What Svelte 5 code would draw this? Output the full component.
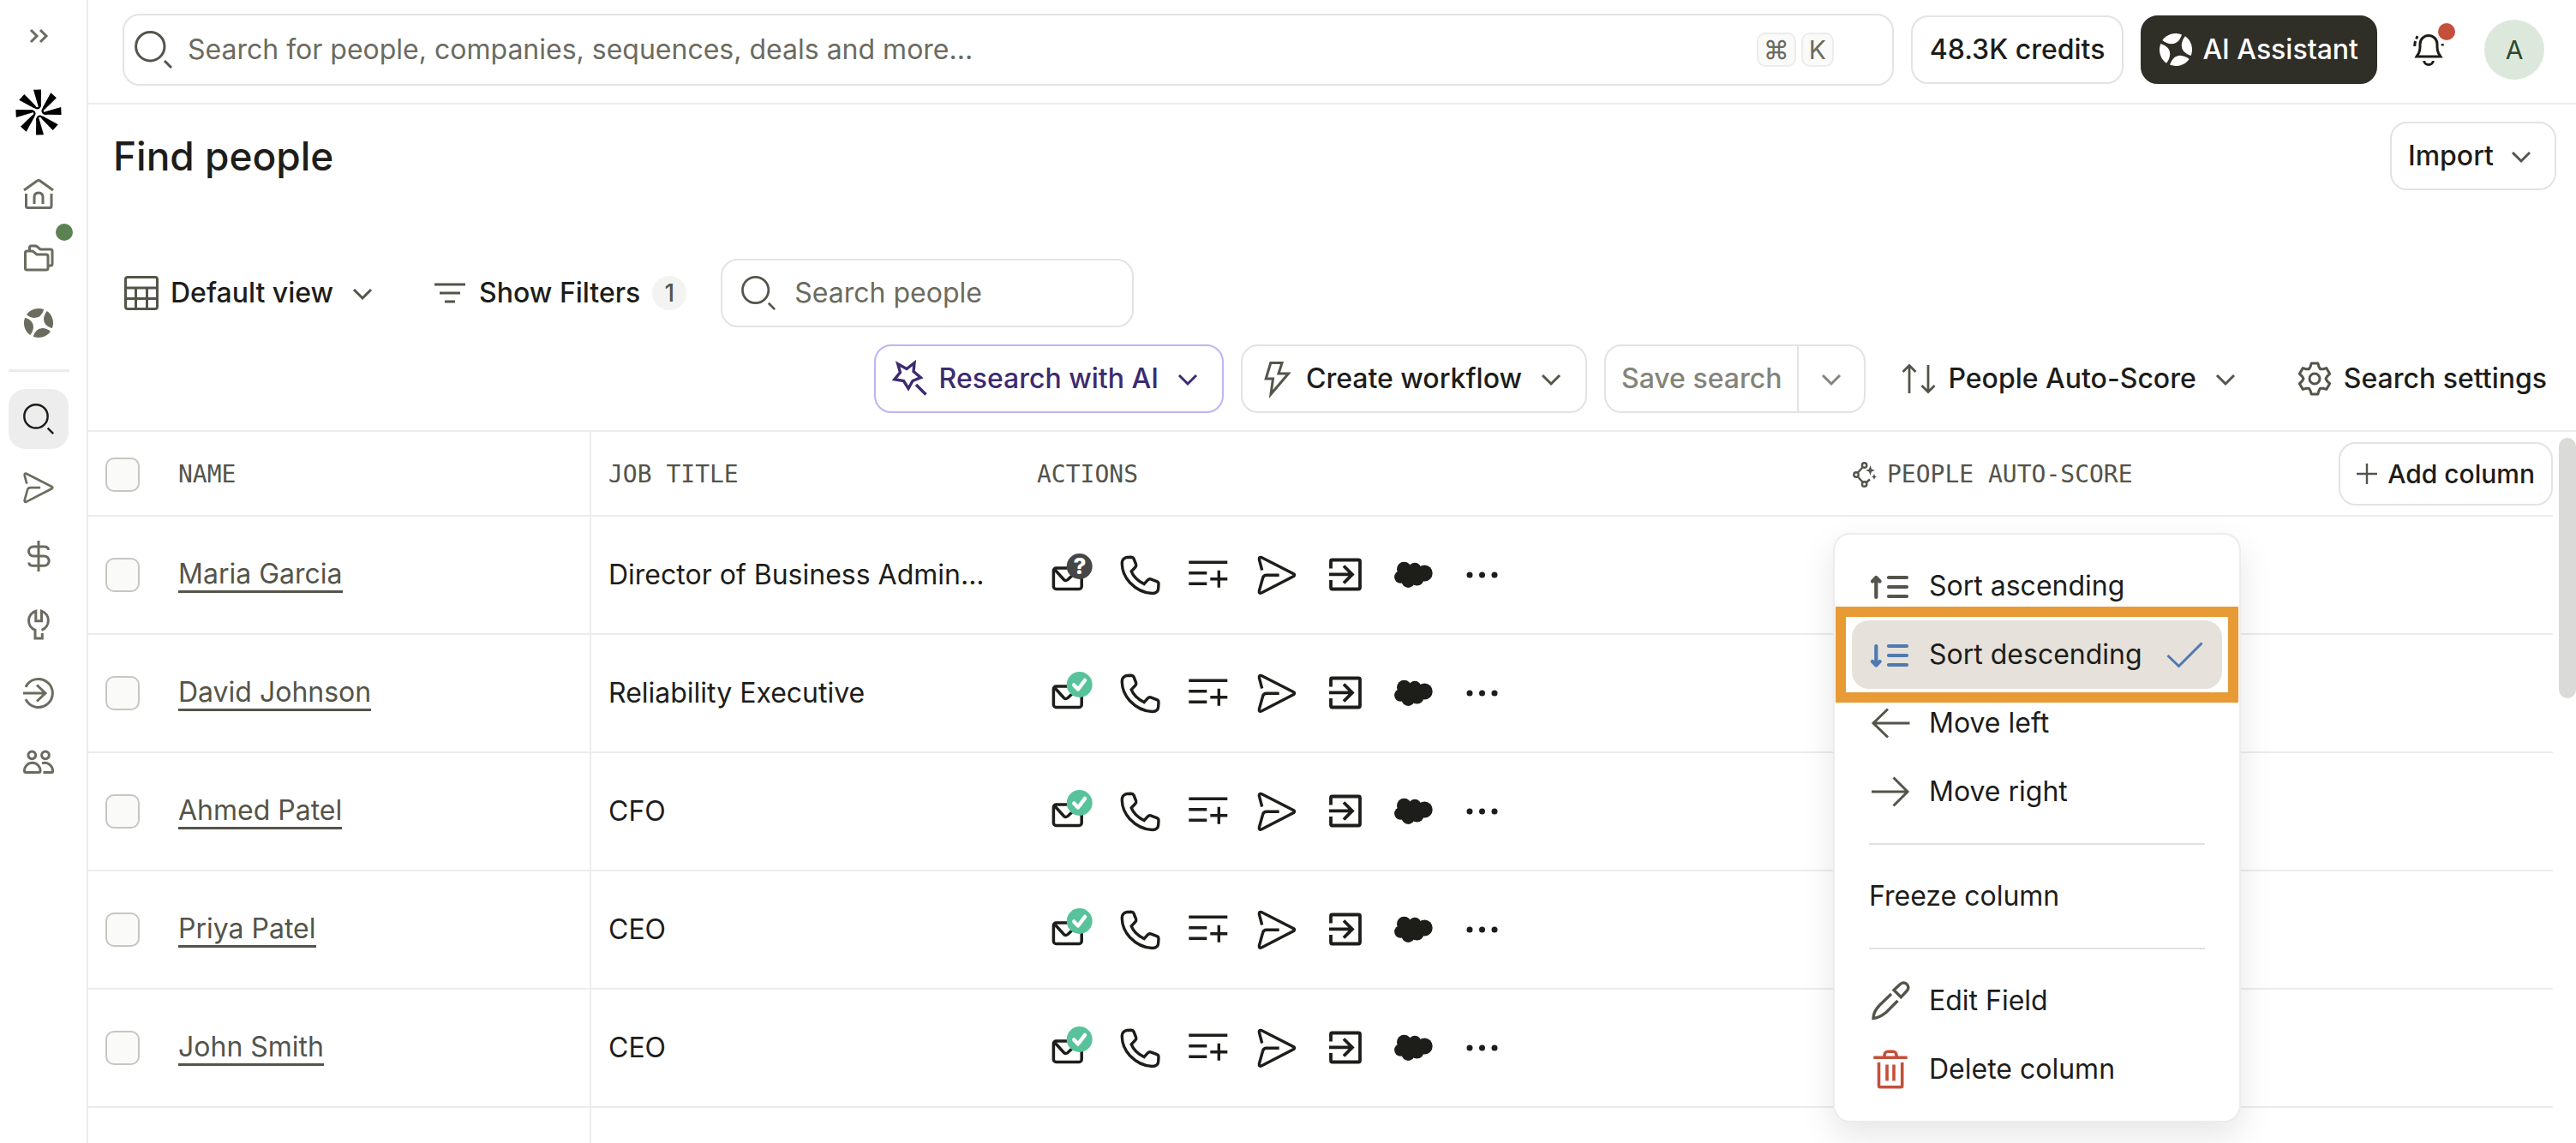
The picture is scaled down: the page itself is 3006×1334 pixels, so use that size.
<script lang="ts">
	type Icon = { box: number; d: string; weight?: number; round?: boolean };

	function gearPath() {
		const points: string[] = [];
		for (let tooth = 0; tooth < 6; tooth++) {
			for (const [offset, radius] of [[-30, 13], [-19, 15], [-12, 18.5], [12, 18.5], [19, 15]]) {
				const a = ((tooth * 60 + offset - 90) * Math.PI) / 180;
				points.push(`${(20 + radius * Math.cos(a)).toFixed(1)} ${(20 + radius * Math.sin(a)).toFixed(1)}`);
			}
		}
		return `M${points.join('L')}ZM26 20A6 6 0 1 0 14 20A6 6 0 1 0 26 20Z`;
	}

	const icons: Record<string, Icon> = {
		expand: { box: 24, d: 'M3 5l7 7-7 7M14 5l7 7-7 7' },
		chevron: { box: 40, d: 'M10 16l10 10 10-10' },
		search: { box: 44, d: 'M35 18.2A16.7 16.7 0 1 0 1.6 18.2A16.7 16.7 0 1 0 35 18.2ZM35 35l8 8' },
		home: {
			box: 36,
			d: 'M1 13L16 2.2Q18 1 20 2.2L35 13M3.5 17V31.5Q3.5 33.5 5.5 33.5H31Q33 33.5 33 31.5V17M13 29V21Q13 16 18 16Q23 16 23 21V29'
		},
		folders: {
			box: 36,
			d: 'M2.5 11Q2.5 9 4.5 9H10Q11.5 9 13 10.5L15.5 12.7Q16 13 17 13H27Q29 13 29 15V29Q29 31 27 31H4.5Q2.5 31 2.5 29ZM7.5 9V5Q7.5 3 9.5 3H14.5L16 3.6L20 7H32Q34 7 34 9V24Q34 26 32 26H29'
		},
		send: {
			box: 48,
			d: 'M6.7 18.5L3.4 6Q3 2.6 6 3.6L43.6 22.8Q45.6 24 43.6 25.6L6 45Q3 46 3.4 42.6L7.6 27.5Q8.4 24.2 12 24.2H26.7',
			weight: 3.4
		},
		dollar: {
			box: 36,
			d: 'M18 0V36M29.5 11Q29.5 7 24.5 7H12A5.5 5.5 0 0 0 12 18H24.5A5.5 5.5 0 0 1 24.5 29.3H11.5Q6.8 29.3 6.8 25.5'
		},
		wrench: {
			box: 36,
			d: 'M21.5 24.3A11.7 11.7 0 0 0 21.5 2.2V13.8H14.8V2.2A11.7 11.7 0 0 0 14 24.3V34H22.3V28'
		},
		login: { box: 36, d: 'M3 10.8A16.5 16.5 0 1 1 3 25.2M0 18H26M16 8.5L26 18L16 27.5' },
		people: {
			box: 36,
			d: 'M14.7 10.3A4.4 4.4 0 1 0 5.9 10.3A4.4 4.4 0 1 0 14.7 10.3ZM30.4 10.3A4.4 4.4 0 1 0 21.6 10.3A4.4 4.4 0 1 0 30.4 10.3ZM3 30.5H18Q20 30.5 20 28.5A9.2 9.2 0 0 0 1.5 28.5Q1.5 30.5 3 30.5ZM22 19.8A9.5 9.5 0 0 1 34.5 28.5V29.5Q34.5 30.5 33 30.5H23.5'
		},
		bell: {
			box: 36,
			d: 'M4 26H32L29.5 22Q28 19 28 15V11.5A10 10 0 0 0 8 11.5V15Q8 19 6.5 22ZM12.7 31A5.3 4.4 0 0 0 23.3 31M1.8 14V12.5Q2 10 2.6 8M3.6 5.5L5 2.2M34.2 13.5V11'
		},
		table: {
			box: 40,
			d: 'M4 1.5H36Q38.5 1.5 38.5 4V36Q38.5 38.5 36 38.5H4Q1.5 38.5 1.5 36V4Q1.5 1.5 4 1.5ZM1.5 14H38.5M1.5 26.5H38.5M13.5 14V38.5M26.5 14V38.5'
		},
		filter: { box: 40, d: 'M2 10H38M8 20H32M14 30H26', weight: 3.2 },
		wand: {
			box: 40,
			d: 'M5.7 2.7L16 8.5L25 1.5L24 11.5L32.5 18.7L23 22.5L18 31.5L12.5 22.5L1.8 20.8L8.5 12.5ZM27 27L38.5 38.5',
			weight: 3.4
		},
		bolt: { box: 40, d: 'M12.8 1.6H26L22 14H33.5L13 38L15.5 20H7.2Z' },
		sort: { box: 40, d: 'M9 37V4.5M1.5 12L9 4.5L16.5 12M31 4V36M23.5 28L31 35.5L38.5 28', weight: 2.8 },
		gear: { box: 40, d: gearPath(), round: true },
		plus: { box: 24, d: 'M12 0V24M0 12H24', weight: 2.4 },
		phone: {
			box: 48,
			d: 'M5 5.5Q7 3.6 9 3.5L14 3.3Q16.2 3.3 17 5L19.6 11.5Q20.2 13.5 18.8 15L14.2 19.8Q17.5 28.5 29 34.6L33.4 29.8Q34.8 28.3 36.8 28.9L44 31.6Q46 32.4 46 34.5L45.7 39.5Q45.5 45.5 38.5 45.5Q24 45 12.5 33Q3.5 23 3.3 11Q3.3 7 5 5.5Z',
			weight: 3.4
		},
		listAdd: { box: 48, d: 'M1.3 9.3H46.3M1.3 21.8H22.3M1.3 34.3H22.3M36.3 18.7V38.7M26.3 28.7H46.3', weight: 3.4 },
		enter: {
			box: 48,
			d: 'M7 16.5V8Q7 6.5 8.5 6.5H39Q41 6.5 41 8V38.5Q41 40.5 39 40.5H8.5Q7 40.5 7 38.5V30M5 23.4H32M22 13.5L32 23.4L22 33.5',
			weight: 3.8
		},
		ascending: { box: 48, d: 'M8.3 37V14.5M4 18.5L8.3 14L12.6 18.5M23 14H44M23 25H44M23 36H44', weight: 4.2, round: true },
		descending: { box: 48, d: 'M8.3 14V36M4 32L8.3 36.5L12.6 32M23 14H44M23 25H44M23 36H44', weight: 4.2, round: true },
		left: { box: 48, d: 'M5 24H47.5M22 7.5L5 24L22 40.5' },
		right: { box: 48, d: 'M3 24H46M28.5 7.5L45 24L28.5 40.5' },
		check: { box: 44, d: 'M2.5 23L15.5 35.5L42.5 8.5' },
		pencil: {
			box: 48,
			d: 'M29 11.5L36.5 4.5Q40.5 1.5 44 4.5Q47.5 8.5 44.5 12L37.3 19.8ZM26 16L12 29.5Q5 37 5 44.5Q12 44 20 37.5L33.5 24',
			weight: 3.4
		},
		trash: {
			box: 48,
			d: 'M5.3 10.2H44.7M18 10Q17.5 3.2 22 3.2H28Q32.5 3.2 32 10M11.5 16V43Q11.5 44.8 13 44.8H37Q38.7 44.8 38.7 43V16M21 18.5V37.5M29 18.5V37.5',
			weight: 3.6
		}
	};

	const mainNav = [
		{ icon: 'home', label: 'Home' },
		{ icon: 'folders', label: 'Folders' },
		{ icon: 'assistant', label: 'Assistant' }
	];

	const toolNav = [
		{ icon: 'search', label: 'Search' },
		{ icon: 'send', label: 'Engage' },
		{ icon: 'dollar', label: 'Deals' },
		{ icon: 'wrench', label: 'Tools' },
		{ icon: 'login', label: 'Inbound' },
		{ icon: 'people', label: 'Team' }
	];

	const people = [
		{ name: 'Maria Garcia', title: 'Director of Business Admin...', verified: false },
		{ name: 'David Johnson', title: 'Reliability Executive', verified: true },
		{ name: 'Ahmed Patel', title: 'CFO', verified: true },
		{ name: 'Priya Patel', title: 'CEO', verified: true },
		{ name: 'John Smith', title: 'CEO', verified: true }
	];

	const sortItems = [
		{ id: 'asc', icon: 'ascending', label: 'Sort ascending' },
		{ id: 'desc', icon: 'descending', label: 'Sort descending' },
		{ id: 'left', icon: 'left', label: 'Move left' },
		{ id: 'right', icon: 'right', label: 'Move right' }
	];

	let active = $state('search');
	let sort = $state('desc');
	let menuOpen = $state(true);
	let query = $state('');
	let peopleQuery = $state('');
	let selected: string[] = $state([]);

	const allSelected = $derived(selected.length === people.length);

	function toggleAll() {
		selected = allSelected ? [] : people.map((p) => p.name);
	}

	function pick(id: string) {
		if (id === 'asc' || id === 'desc') sort = id;
	}
</script>

{#snippet icon(name: string, size: number = icons[name].box)}
	<svg
		class="icon"
		class:round={icons[name].round}
		width={size}
		height={size}
		viewBox="0 0 {icons[name].box} {icons[name].box}"
		stroke-width={icons[name].weight ?? 3}
		aria-hidden="true"
	>
		<path d={icons[name].d} />
	</svg>
{/snippet}

{#snippet assistantIcon(size: number)}
	<svg class="icon solid" width={size} height={size} viewBox="-19 -19 38 38" aria-hidden="true">
		{#each [0, 90, 180, 270] as angle}
			<path d="M-15.7 -11A19 19 0 0 1 7 -17.6Q3.5 -6.8 -5 -6.7Q-11 -7 -15.7 -11Z" transform="rotate({angle})" />
		{/each}
	</svg>
{/snippet}

{#snippet mailIcon(verified: boolean)}
	<svg class="icon" width="48" height="48" viewBox="0 0 48 48" stroke-width="3.5" aria-hidden="true">
		<rect x="3.4" y="16" width="32.8" height="24.4" rx="3" />
		<path d="M5 18L15.5 29.5Q17.5 31.5 20 29.5L27 23" />
		{#if verified}
			<circle class="badge-ok" cx="33.7" cy="14" r="15" />
			<path class="badge-mark" d="M27.2 14.5L32 19.5L40 9" />
		{:else}
			<circle class="badge-unknown" cx="33.7" cy="14" r="15" />
			<text class="badge-text" x="34" y="23" text-anchor="middle">?</text>
		{/if}
	</svg>
{/snippet}

<div class="app">
	<nav class="sidebar">
		<button class="expand" aria-label="Expand sidebar">{@render icon('expand')}</button>
		<a class="logo" href="/" aria-label="Dashboard">
			<svg width="54" height="54" viewBox="-27 -27 54 54" aria-hidden="true">
				{#each [0, 45, 90, 135, 180, 225, 270, 315] as angle}
					<path d="M-6 -26.2L3 -26.6L2.8 -8Q2.6 -6 1 -6.5Q-1 -7 -1 -9Z" transform="rotate({angle})" />
				{/each}
				{#each [0, 90, 180, 270] as angle}
					<path class="hook" d="M1.6 -10Q2 -5 -1.5 -4.6Q-3.5 -4.6 -7 -8" transform="rotate({angle})" />
				{/each}
			</svg>
		</a>
		<div class="nav-group tight">
			{#each mainNav as item}
				<button class="tile" class:active={active === item.icon} aria-label={item.label} onclick={() => (active = item.icon)}>
					{#if item.icon === 'assistant'}
						{@render assistantIcon(34)}
					{:else}
						{@render icon(item.icon, 36)}
					{/if}
					{#if item.icon === 'folders'}<span class="dot green"></span>{/if}
				</button>
			{/each}
		</div>
		<hr />
		<div class="nav-group">
			{#each toolNav as item}
				<button class="tile" class:active={active === item.icon} aria-label={item.label} onclick={() => (active = item.icon)}>
					{@render icon(item.icon, item.icon === 'send' ? 38 : 36)}
				</button>
			{/each}
		</div>
	</nav>

	<div class="main">
		<header class="topbar">
			<label class="global-search">
				{@render icon('search')}
				<input
					type="text"
					aria-label="Search"
					placeholder="Search for people, companies, sequences, deals and more..."
					bind:value={query}
				/>
				<span class="keys">
					<kbd>⌘</kbd>
					<kbd>K</kbd>
				</span>
			</label>
			<button class="btn">48.3K credits</button>
			<button class="btn dark">{@render assistantIcon(38)} AI Assistant</button>
			<button class="bell" aria-label="Notifications">
				{@render icon('bell')}
				<span class="dot red"></span>
			</button>
			<button class="avatar" aria-label="Account">A</button>
		</header>

		<div class="page-head">
			<h1>Find people</h1>
			<button class="btn import">Import {@render icon('chevron')}</button>
		</div>

		<div class="toolbar">
			<div class="toolbar-row">
				<button class="btn ghost">{@render icon('table')} Default view {@render icon('chevron')}</button>
				<button class="btn ghost">{@render icon('filter')} Show Filters <span class="count">1</span></button>
				<label class="people-search">
					{@render icon('search', 40)}
					<input type="text" aria-label="Search people" placeholder="Search people" bind:value={peopleQuery} />
				</label>
			</div>
			<div class="toolbar-row end">
				<button class="btn purple">{@render icon('wand')} Research with AI {@render icon('chevron')}</button>
				<button class="btn">{@render icon('bolt')} Create workflow {@render icon('chevron')}</button>
				<div class="split">
					<button class="save" disabled>Save search</button>
					<button class="more" aria-label="More save options">{@render icon('chevron')}</button>
				</div>
				<button class="btn ghost">{@render icon('sort')} People Auto-Score {@render icon('chevron')}</button>
				<button class="btn ghost">{@render icon('gear')} Search settings</button>
			</div>
		</div>

		<div class="table-area">
			<table>
				<colgroup>
					<col class="col-name" />
					<col class="col-title" />
					<col class="col-actions" />
					<col />
					<col class="col-add" />
				</colgroup>
				<thead>
					<tr>
						<th class="name-col">
							<div class="name-cell">
								<input type="checkbox" aria-label="Select all" checked={allSelected} onchange={toggleAll} />
								<span>NAME</span>
							</div>
						</th>
						<th>JOB TITLE</th>
						<th>ACTIONS</th>
						<th class="score-col">
							<button class="score-head" onclick={() => (menuOpen = !menuOpen)}>
								<svg class="icon" width="28" height="30" viewBox="0 0 28 30" stroke-width="2.4" aria-hidden="true">
									<circle cx="13.6" cy="4" r="2.7" />
									<circle cx="4" cy="15" r="2.7" />
									<circle cx="13.6" cy="26" r="2.7" />
									<path d="M11.5 6.5L6 12.5M6 17.5L11.5 23.5M16 24L20 20.5" />
									<path class="spark" d="M20.5 4L22 8.5L26 10L22 11.5L20.5 16L19 11.5L15 10L19 8.5ZM25 14L26 16.5L28 17.5L26 18.5L25 21L24 18.5L22 17.5L24 16.5Z" />
								</svg>
								PEOPLE AUTO-SCORE
							</button>

							{#if menuOpen}
								<div class="menu" role="menu">
									{#each sortItems as item}
										<div class="menu-slot" class:highlight={item.id === 'desc'}>
											<button class="menu-item" class:chosen={sort === item.id} role="menuitem" onclick={() => pick(item.id)}>
												{@render icon(item.icon)}
												<span>{item.label}</span>
												{#if sort === item.id}
													<span class="tick">{@render icon('check')}</span>
												{/if}
											</button>
										</div>
									{/each}
									<hr />
									<button class="menu-item" role="menuitem">Freeze column</button>
									<hr />
									<button class="menu-item" role="menuitem">
										{@render icon('pencil')}
										<span>Edit Field</span>
									</button>
									<button class="menu-item danger" role="menuitem">
										{@render icon('trash')}
										<span>Delete column</span>
									</button>
								</div>
							{/if}
						</th>
						<th class="add-col">
							<button class="btn add">{@render icon('plus')} Add column</button>
						</th>
					</tr>
				</thead>
				<tbody>
					{#each people as person}
						<tr>
							<td class="name-col">
								<div class="name-cell">
									<input type="checkbox" aria-label="Select {person.name}" value={person.name} bind:group={selected} />
									<a href="#{person.name.toLowerCase().replace(' ', '-')}">{person.name}</a>
								</div>
							</td>
							<td class="job">{person.title}</td>
							<td>
								<div class="actions">
									<button aria-label="Email">{@render mailIcon(person.verified)}</button>
									<button aria-label="Call">{@render icon('phone')}</button>
									<button aria-label="Add to list">{@render icon('listAdd')}</button>
									<button aria-label="Add to sequence">{@render icon('send')}</button>
									<button aria-label="Push">{@render icon('enter')}</button>
									<button aria-label="Push to CRM">
										<svg class="icon solid" width="48" height="48" viewBox="0 0 48 48" aria-hidden="true">
											<circle cx="12.5" cy="17.2" r="8.5" />
											<circle cx="25" cy="17.2" r="7.5" />
											<circle cx="36.3" cy="22" r="9.4" />
											<circle cx="8.4" cy="26.5" r="7.3" />
											<circle cx="17.3" cy="31" r="7.9" />
											<circle cx="27.5" cy="28.5" r="8" />
											<path d="M12 14H32V32H12Z" />
										</svg>
									</button>
									<button aria-label="More">
										<svg class="icon solid" width="48" height="48" viewBox="0 0 48 48" aria-hidden="true">
											<circle cx="9" cy="24" r="3.5" />
											<circle cx="23.5" cy="24" r="3.5" />
											<circle cx="38" cy="24" r="3.5" />
										</svg>
									</button>
								</div>
							</td>
							<td></td>
							<td></td>
						</tr>
					{/each}
					<tr>
						<td class="name-col"></td>
						<td></td>
						<td></td>
						<td></td>
						<td></td>
					</tr>
				</tbody>
			</table>
			<div class="scrollbar"><div class="thumb"></div></div>
		</div>
	</div>
</div>

<style>
	:global(body) {
		background: #fff;
	}

	.app {
		--ink: #1d1d1a;
		--ink-mid: #54544a;
		--ink-light: #6b6b60;
		--border: #e3e3e3;
		--rule: #ececec;
		display: flex;
		height: 100vh;
		overflow: hidden;
		font-family: Inter, 'Liberation Sans', sans-serif;
		font-size: 32px;
		line-height: 38px;
		color: var(--ink);
	}

	.app *,
	.app *::after {
		box-sizing: border-box;
	}

	button,
	input {
		font: inherit;
		color: inherit;
		background: none;
		border: none;
		padding: 0;
		margin: 0;
	}

	button {
		cursor: pointer;
	}

	.icon {
		display: block;
		flex-shrink: 0;
		fill: none;
		stroke: currentColor;
		overflow: visible;
	}

	.icon.round {
		stroke-linecap: round;
		stroke-linejoin: round;
	}

	.icon.solid {
		fill: currentColor;
		stroke: none;
	}

	/* ── Sidebar ── */
	.sidebar {
		flex: none;
		width: 103px;
		padding: 30px 20px 0 10px;
		border-right: 2px solid var(--rule);
		color: var(--ink-light);
	}

	.expand {
		display: flex;
		justify-content: center;
		width: 70px;
	}

	.logo {
		display: flex;
		justify-content: center;
		width: 70px;
		margin: 50px 0 34px;
	}

	.logo path {
		fill: #000;
	}

	.logo .hook {
		fill: none;
		stroke: #000;
		stroke-width: 2.4;
	}

	.nav-group {
		display: flex;
		flex-direction: column;
		gap: 10px;
	}

	.nav-group.tight {
		gap: 5px;
	}

	.tile {
		position: relative;
		display: flex;
		align-items: center;
		justify-content: center;
		width: 70px;
		height: 70px;
		border-radius: 20px;
	}

	.tile.active {
		background: #ededed;
		color: var(--ink);
	}

	.sidebar hr {
		height: 3px;
		margin: 19px 0 20px;
		border: none;
		background: #ebebeb;
	}

	.dot {
		position: absolute;
		width: 20px;
		height: 20px;
		border-radius: 50%;
	}

	.dot.green {
		top: -6px;
		right: -5px;
		background: #5a8253;
	}

	.dot.red {
		top: 9px;
		right: 9px;
		background: #c4503b;
	}

	/* ── Top bar ── */
	.main {
		flex: 1;
		min-width: 0;
		display: flex;
		flex-direction: column;
	}

	.topbar {
		display: flex;
		align-items: center;
		gap: 20px;
		padding: 16px 37px 20px 40px;
		border-bottom: 2px solid var(--rule);
	}

	.global-search {
		flex: 1;
		display: flex;
		align-items: center;
		gap: 10px;
		height: 84px;
		padding: 0 68px 0 12px;
		border: 2px solid var(--border);
		border-radius: 20px;
		color: var(--ink-mid);
	}

	.global-search input,
	.people-search input {
		flex: 1;
		min-width: 0;
		padding-left: 8px;
		outline: none;
	}

	input::placeholder {
		color: var(--ink-light);
		opacity: 1;
	}

	.keys {
		display: flex;
		gap: 6px;
	}

	kbd {
		display: flex;
		align-items: center;
		justify-content: center;
		min-width: 38px;
		height: 40px;
		padding: 0 6px;
		border: 2px solid var(--rule);
		border-radius: 10px;
		background: #fafaf9;
		font-family: Inter, 'DejaVu Sans', sans-serif;
		font-size: 30px;
		color: var(--ink-light);
	}

	.btn {
		display: flex;
		align-items: center;
		gap: 14px;
		height: 80px;
		padding: 0 20px;
		border: 2px solid var(--border);
		border-radius: 20px;
		font-weight: 500;
		white-space: nowrap;
	}

	.btn .icon {
		color: var(--ink-mid);
	}

	.btn.dark {
		gap: 12px;
		border-color: #2f2e27;
		background: #2f2e27;
		color: #fff;
	}

	.btn.dark .icon {
		color: #fff;
	}

	.btn.ghost {
		border-color: transparent;
	}

	.btn.purple {
		border-color: #beb4f5;
		color: #3d2b70;
	}

	.btn.purple .icon {
		color: inherit;
	}

	.btn.import {
		gap: 12px;
		padding: 0 19px;
	}

	.bell {
		position: relative;
		display: flex;
		align-items: center;
		justify-content: center;
		width: 80px;
		height: 80px;
		margin-right: 5px;
	}

	.avatar {
		width: 70px;
		height: 70px;
		border-radius: 50%;
		background: #dde8dc;
		color: #2f4a2e;
		font-size: 30px;
	}

	/* ── Page head and toolbar ── */
	.page-head {
		display: flex;
		align-items: center;
		justify-content: space-between;
		padding: 20px 23px 80px 29px;
	}

	h1 {
		margin: 0;
		font-size: 46px;
		line-height: 58px;
		font-weight: 500;
	}

	.toolbar {
		display: flex;
		flex-direction: column;
		gap: 20px;
		padding: 0 12px 20px 20px;
	}

	.toolbar-row {
		display: flex;
		align-items: center;
		gap: 18px;
	}

	.toolbar-row.end {
		gap: 20px;
		justify-content: flex-end;
	}

	.count {
		width: 40px;
		height: 40px;
		border-radius: 50%;
		background: #f3f3f1;
		color: var(--ink-mid);
		text-align: center;
		font-size: 28px;
		line-height: 40px;
	}

	.people-search {
		display: flex;
		align-items: center;
		gap: 14px;
		width: 482px;
		height: 80px;
		padding: 0 22px;
		border: 2px solid var(--border);
		border-radius: 20px;
		color: var(--ink-mid);
	}

	.split {
		display: flex;
		height: 80px;
		border: 2px solid var(--border);
		border-radius: 20px;
	}

	.save {
		padding: 0 18px;
		font-weight: 500;
		color: #84847a;
	}

	.more {
		padding: 0 18px;
		border-left: 2px solid var(--border);
		color: #84847a;
	}

	/* ── Table ── */
	.table-area {
		flex: 1;
		min-height: 0;
		display: flex;
		align-items: flex-start;
		overflow: hidden;
		border-top: 2px solid var(--rule);
	}

	table {
		flex: 1;
		width: 100%;
		table-layout: fixed;
		border-spacing: 0;
	}

	.col-name {
		width: 587px;
	}

	.col-title {
		width: 500px;
	}

	.col-actions {
		width: 952px;
	}

	.col-add {
		width: 270px;
	}

	th,
	td {
		height: 138px;
		padding: 0 20px;
		border-bottom: 2px solid var(--rule);
		text-align: left;
	}

	th {
		height: 99px;
		padding-top: 2px;
		font-family: 'DejaVu Sans Mono', monospace;
		font-size: 28px;
		font-weight: 400;
		color: var(--ink-mid);
	}

	.name-col {
		border-right: 2px solid var(--rule);
	}

	.name-cell {
		display: flex;
		align-items: center;
		gap: 45px;
	}

	input[type='checkbox'] {
		appearance: none;
		width: 40px;
		height: 40px;
		border: 2px solid #c6c6c2;
		border-radius: 10px;
		background: #fafaf8;
	}

	input[type='checkbox']:checked {
		background: var(--ink-mid);
	}

	.name-cell a {
		border-bottom: 3px solid var(--ink-mid);
		color: var(--ink-mid);
		text-decoration: none;
	}

	.job {
		white-space: nowrap;
	}

	.actions {
		display: flex;
		gap: 32px;
		padding-left: 16px;
	}

	.badge-unknown {
		fill: #464646;
		stroke: none;
	}

	.badge-ok {
		fill: #58c39a;
		stroke: none;
	}

	.badge-mark {
		stroke: #fff;
		stroke-width: 4.5;
		stroke-linecap: round;
		stroke-linejoin: round;
	}

	.badge-text {
		fill: #fff;
		stroke: none;
		font-size: 26px;
		font-weight: 800;
	}

	.score-col {
		position: relative;
	}

	.score-head {
		display: flex;
		align-items: center;
		gap: 12px;
	}

	.spark {
		fill: currentColor;
		stroke: none;
	}

	th.add-col {
		padding: 0;
		font-family: Inter, 'Liberation Sans', sans-serif;
		font-size: 30px;
	}

	.btn.add {
		gap: 12px;
		height: 74px;
		margin-left: auto;
		padding: 0 19px;
		color: var(--ink);
	}

	.scrollbar {
		flex: none;
		width: 27px;
		padding: 7px 0 0 7px;
	}

	.thumb {
		height: 304px;
		border-radius: 10px;
		background: #dadad8;
	}

	/* ── Column menu ── */
	.menu {
		position: absolute;
		z-index: 2;
		top: calc(100% + 21px);
		left: -3px;
		width: 476px;
		padding: 20px;
		border: 2px solid var(--rule);
		border-radius: 20px;
		background: #fff;
		box-shadow: 0 16px 40px rgba(0, 0, 0, 0.1);
		font-family: Inter, 'Liberation Sans', sans-serif;
		font-size: 32px;
		color: var(--ink);
	}

	.menu-slot {
		position: relative;
	}

	.menu-slot.highlight::after {
		content: '';
		position: absolute;
		inset: -16px -19px;
		border: 12px solid #e89a35;
		pointer-events: none;
	}

	.menu-item {
		display: flex;
		align-items: center;
		gap: 22px;
		width: 100%;
		height: 80px;
		padding: 0 22px 0 20px;
		border-radius: 20px;
		white-space: nowrap;
	}

	.menu-item .icon {
		color: var(--ink-mid);
	}

	.menu-item.chosen {
		background: #e6e1da;
	}

	.menu-item.chosen .icon {
		color: #5079b0;
	}

	.menu-item.danger .icon {
		color: #c4503b;
	}

	.tick {
		margin-left: auto;
	}

	.menu hr {
		height: 2px;
		margin: 20px;
		border: none;
		background: #e1e1e1;
	}
</style>
